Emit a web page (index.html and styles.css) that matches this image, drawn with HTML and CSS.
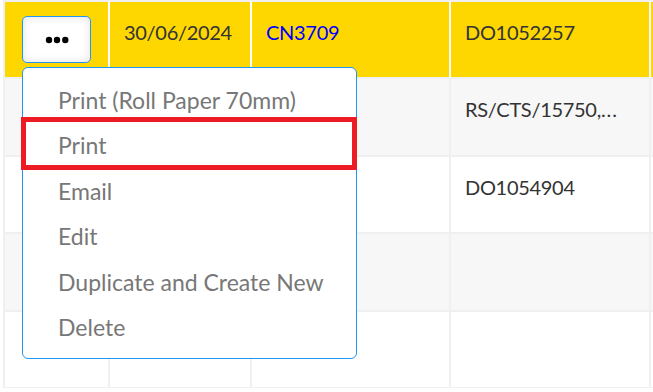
FILE: index.html
```html
<!DOCTYPE html>
<html>
<head>
<meta charset="utf-8">
<link rel="stylesheet" href="styles.css">
</head>
<body>
<div class="page">
  <div class="grid">
    <div class="row row-active">
      <div class="cell cell-action">
        <button class="dots-btn" type="button" aria-label="Actions">
          <svg width="24" height="8" viewBox="0 0 24 8"><circle cx="4" cy="4" r="3.2"/><circle cx="12" cy="4" r="3.2"/><circle cx="20.3" cy="4" r="3.2"/></svg>
        </button>
      </div>
      <div class="cell">30/06/2024</div>
      <div class="cell"><span class="link">CN3709</span></div>
      <div class="cell">DO1052257</div>
      <div class="cell"></div>
    </div>
    <div class="row row-alt">
      <div class="cell"></div>
      <div class="cell"></div>
      <div class="cell"></div>
      <div class="cell">RS/CTS/15750,<span class="ellipsis">...</span></div>
      <div class="cell"></div>
    </div>
    <div class="row">
      <div class="cell"></div>
      <div class="cell"></div>
      <div class="cell"></div>
      <div class="cell">DO1054904</div>
      <div class="cell"></div>
    </div>
    <div class="row row-alt">
      <div class="cell"></div>
      <div class="cell"></div>
      <div class="cell"></div>
      <div class="cell"></div>
      <div class="cell"></div>
    </div>
    <div class="row">
      <div class="cell"></div>
      <div class="cell"></div>
      <div class="cell"></div>
      <div class="cell"></div>
      <div class="cell"></div>
    </div>
  </div>

  <ul class="menu">
    <li class="menu-item">Print (Roll Paper 70mm)</li>
    <li class="menu-item">Print</li>
    <li class="menu-item">Email</li>
    <li class="menu-item">Edit</li>
    <li class="menu-item">Duplicate and Create New</li>
    <li class="menu-item">Delete</li>
  </ul>
  <div class="highlight"></div>
</div>
</body>
</html>
```

FILE: styles.css
```css
html, body {
  margin: 0;
  padding: 0;
  background: #ffffff;
}

.page {
  position: relative;
  width: 653px;
  height: 392px;
  overflow: hidden;
  font-family: Lato, "Noto Sans", sans-serif;
  color: #333333;
}

.grid {
  display: flex;
  flex-direction: column;
  margin-left: 3px;
  border-top: 1px solid #f0f0f0;
  border-left: 1px solid #f0f0f0;
  width: 760px;
}

.row {
  display: grid;
  grid-template-columns: 105px 142px 199px 200px 110px;
  height: 77.4px;
  background: #ffffff;
}

.row-alt {
  background: #f7f7f7;
}

.row-active {
  background: #ffd700;
}

.cell {
  box-sizing: border-box;
  border: 1px solid #f0f0f0;
  padding: 17px 10px 0 14px;
  font-size: 20px;
  letter-spacing: -0.3px;
  line-height: 26px;
  white-space: nowrap;
  overflow: hidden;
}

.ellipsis {
  letter-spacing: 1px;
}

.row-active .cell {
  border-left-color: #ffffff;
  border-right-color: #ffffff;
  border-top-color: #f0f0f0;
}

.row-active .cell:first-child {
  border-left-color: #f0f0f0;
}

.cell-action {
  padding: 14px 0 0 17px;
}

.link {
  color: #0000ff;
}

.dots-btn {
  box-sizing: border-box;
  width: 69px;
  height: 47px;
  margin: 0;
  padding: 0;
  border: 1px solid #2196f3;
  border-radius: 5px;
  background: #ffffff;
  box-shadow: inset 0 0 9px rgba(0, 0, 0, 0.12);
  display: flex;
  align-items: center;
  justify-content: center;
}

.dots-btn svg {
  display: block;
  fill: #000000;
}

.menu {
  position: absolute;
  left: 22px;
  top: 67px;
  box-sizing: border-box;
  width: 335px;
  height: 292px;
  margin: 0;
  padding: 10px 0 7.6px;
  list-style: none;
  background: #ffffff;
  border: 1px solid #2196f3;
  border-radius: 6px;
}

.menu-item {
  height: 45.4px;
  line-height: 45.4px;
  padding-left: 35px;
  font-size: 23px;
  color: #777777;
  white-space: nowrap;
}

.highlight {
  position: absolute;
  left: 21px;
  top: 117px;
  box-sizing: border-box;
  width: 336px;
  height: 53px;
  border: 5px solid #ed1c24;
}
```
